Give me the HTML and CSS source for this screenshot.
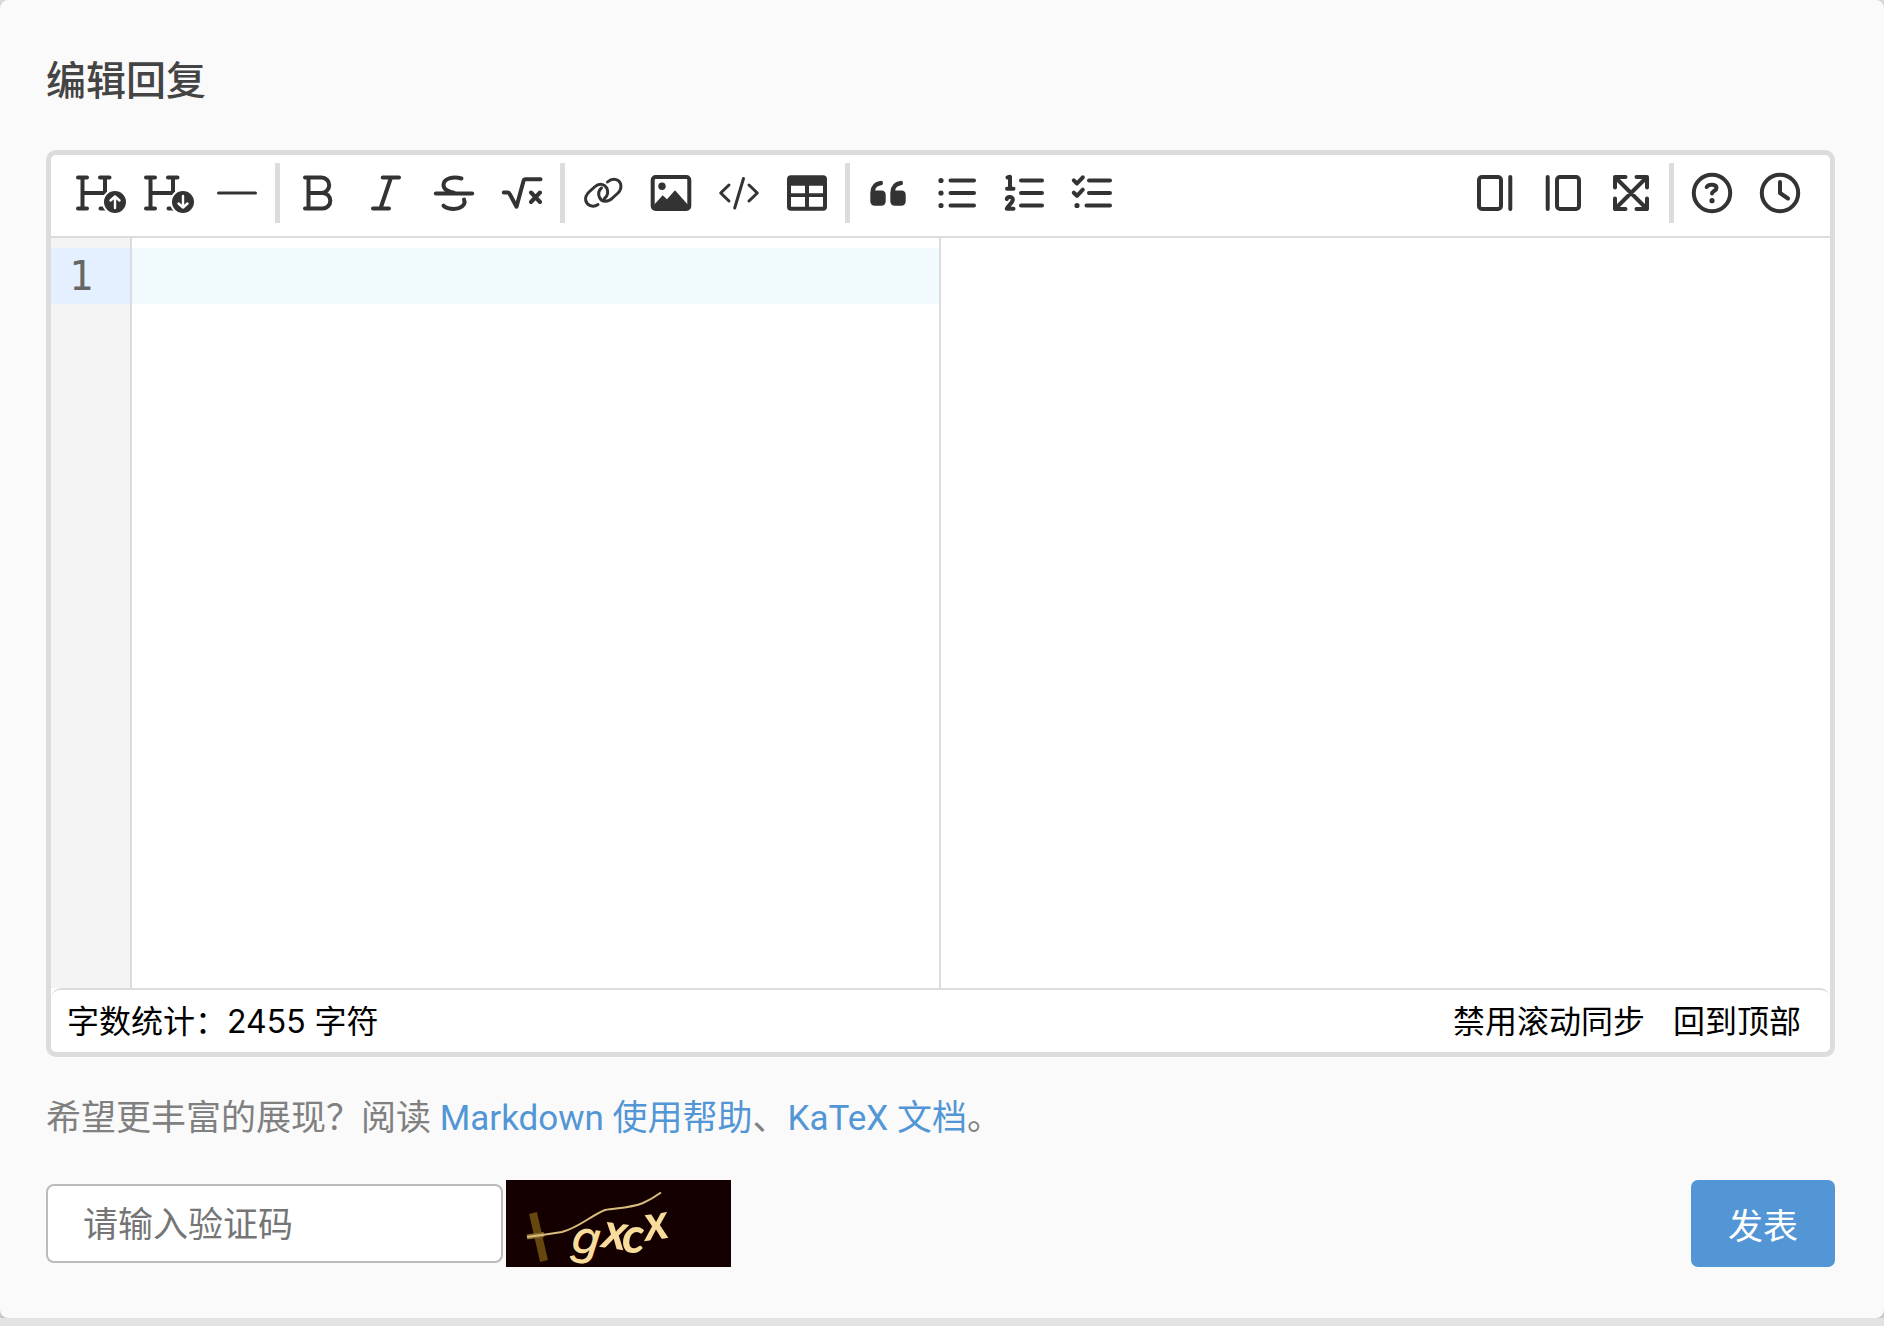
FILE: index.html
```html
<!DOCTYPE html>
<html lang="zh-CN">
<head>
<meta charset="utf-8">
<title>编辑回复</title>
<link rel="stylesheet" href="styles.css">
</head>
<body>
<form class="card">
  <h1 class="card-title">编辑回复</h1>

  <section class="editor">
    <div class="toolbar">
      <div class="tools">
        <button type="button" class="tool" aria-label="升级标题"><svg viewBox="0 0 68 60"><path d="M11 14.5H20M11 45.5H20M15.5 14.5V45.5M33 14.5H42.500M38 14.500V30M15.500 30H38M33.500 45.500H42"/><circle class="badge" cx="48" cy="39" r="12"/><path class="arrow" d="M48 45V33.500M43.500 37.500L48 33.500L52.500 37.500"/></svg></button>
        <button type="button" class="tool" aria-label="降级标题"><svg viewBox="0 0 68 60"><path d="M11 14.5H20M11 45.5H20M15.5 14.5V45.5M33 14.5H42.500M38 14.500V30M15.500 30H38M33.500 45.500H42"/><circle class="badge" cx="48" cy="39" r="12"/><path class="arrow" d="M48 33V44.500M43.500 40.500L48 44.500L52.500 40.500"/></svg></button>
        <button type="button" class="tool" aria-label="分割线"><svg viewBox="0 0 68 60"><path class="thin" d="M15.500 30H52.500"/></svg></button>
        <span class="divider"></span>
        <button type="button" class="tool" aria-label="粗体"><svg viewBox="0 0 68 60"><path d="M21 14.500H37.500a7.700 7.700 0 0 1 0 15.400H24.500M37.500 29.900H38.500a7.800 7.800 0 0 1 0 15.600H21M24.500 14.500V45.500"/></svg></button>
        <button type="button" class="tool" aria-label="斜体"><svg viewBox="0 0 68 60"><path d="M30.700 14.500H47M21 45.500H37M39 14.500L28.500 45.500"/></svg></button>
        <button type="button" class="tool" aria-label="删除线"><svg viewBox="0 0 68 60"><path d="M15.800 30.500H52.200M41.500 15.500C33 13 23.500 15.500 23.500 22C23.500 27 29 28.500 34.500 30M44 36.500C46.500 43 39 46 34 46C29.500 46 26 45 23.500 42.700"/></svg></button>
        <button type="button" class="tool" aria-label="公式"><svg viewBox="0 0 68 60"><path d="M15.800 29.500H19.500Q21 29.500 21.700 31L28.500 43.700L35.500 18Q36 16.300 37.500 16.300H52.500M43 29.500L52 39M52 29.500L43 39"/></svg></button>
        <span class="divider"></span>
        <button type="button" class="tool" aria-label="链接"><svg viewBox="0 0 68 60"><path class="thin" d="M29 41.500C24 45 18 42.500 16.700 37.500C16 34 17.500 31.500 20 29L25.500 24C30 20 35.500 20.500 38 25.500C39.500 29.500 38.500 33 35.500 35.500M38.500 19C43 15 49.500 15.500 51.500 20.500C52.700 24.500 51.500 27.500 49 30L43.500 35C39 39.500 33 39.500 30.500 34.500C29 30.500 30 27 32.500 25"/></svg></button>
        <button type="button" class="tool" aria-label="图片"><svg viewBox="0 0 68 60"><rect x="15.700" y="14" width="36.600" height="32" rx="3"/><circle class="solid" cx="25" cy="23.300" r="3.700"/><path class="solid" d="M16 43L25.700 32.300L30 36.300L38 27.300L52 43V46H16Z"/></svg></button>
        <button type="button" class="tool" aria-label="代码"><svg viewBox="0 0 68 60"><path class="thin" d="M24 22L15.700 30L24 38M44 22L52.300 30L44 38M38.500 15.500L29.700 45"/></svg></button>
        <button type="button" class="tool" aria-label="表格"><svg viewBox="0 0 68 60"><path class="solid" fill-rule="evenodd" d="M18 12.300H50a4 4 0 0 1 4 4V43.700a4 4 0 0 1-4 4H18a4 4 0 0 1-4-4V16.300a4 4 0 0 1 4-4ZM18 22.700V30.300H32V22.700ZM36 22.700V30.300H50V22.700ZM18 34V43.700H32V34ZM36 34V43.700H50V34Z"/></svg></button>
        <span class="divider"></span>
        <button type="button" class="tool" aria-label="引用"><svg viewBox="0 0 68 60"><path class="solid" d="M27 17.700Q29 17.700 29 20T27 22.200Q21.500 23 21.200 27.500H27.500Q31.700 27.500 31.700 32V38Q31.700 42.700 27 42.700H21Q16.300 42.700 16.300 38V30Q16.300 19 27 17.700ZM47 17.700Q49 17.700 49 20T47 22.200Q41.500 23 41.200 27.500H47.500Q51.700 27.500 51.700 32V38Q51.700 42.700 47 42.700H41Q36.300 42.700 36.300 38V30Q36.300 19 47 17.700Z"/></svg></button>
        <button type="button" class="tool" aria-label="无序列表"><svg viewBox="0 0 68 60"><path d="M28.500 17.500H52M28.500 30H52M28.500 42.500H52"/><g class="solid"><circle cx="19" cy="17.500" r="2.600"/><circle cx="19" cy="30" r="2.600"/><circle cx="19" cy="42.500" r="2.600"/></g></svg></button>
        <button type="button" class="tool" aria-label="有序列表"><svg viewBox="0 0 68 60"><path d="M31 17.500H52M31 30H52M31 42.500H52M17.500 14.500L20 13.800V25.500M17 25.700H23.500M16.800 36C17.500 33 23.300 33.500 22.800 37C22.500 40 18 42.500 16.800 45.700H23.500"/></svg></button>
        <button type="button" class="tool" aria-label="任务列表"><svg viewBox="0 0 68 60"><path d="M31 17.500H52M31 30H52M28.500 42.500H52M15.800 17.300L19 20.500L24.800 14.300M15.800 29.700L19 32.800L24.800 26.700"/><circle class="solid" cx="19" cy="42.500" r="2.600"/></svg></button>
      </div>
      <div class="tools">
        <button type="button" class="tool" aria-label="仅编辑区"><svg viewBox="0 0 68 60"><rect x="18" y="14" width="22" height="32" rx="3"/><path d="M49.300 14V46"/></svg></button>
        <button type="button" class="tool" aria-label="仅预览区"><svg viewBox="0 0 68 60"><rect x="28" y="14" width="22" height="32" rx="3"/><path d="M18.700 14V46"/></svg></button>
        <button type="button" class="tool" aria-label="全屏"><svg viewBox="0 0 68 60"><path d="M28.500 14H18V24.500M39.500 14H50V24.500M28.500 46H18V35.500M39.500 46H50V35.500M18 14L50 46M50 14L18 46"/></svg></button>
        <span class="divider"></span>
        <button type="button" class="tool" aria-label="帮助"><svg viewBox="0 0 68 60"><circle cx="34" cy="30" r="18.200"/><path d="M28.700 24C31 20.500 38.500 21 38.500 25C38.500 28 34 28 34 30.500"/><circle class="solid" cx="34" cy="37.700" r="2.600"/></svg></button>
        <button type="button" class="tool" aria-label="历史"><svg viewBox="0 0 68 60"><circle cx="34" cy="30" r="18.200"/><path d="M34 19V30L42 35.500"/></svg></button>
      </div>
    </div>

    <div class="panes">
      <div class="source">
        <div class="gutter"><span class="line-number">1</span></div>
        <textarea class="code" aria-label="回复内容"></textarea>
      </div>
      <div class="preview"></div>
    </div>

    <div class="status">
      <span>字数统计：2455 字符</span>
      <div class="status-actions">
        <button type="button" class="status-button">禁用滚动同步</button>
        <button type="button" class="status-button">回到顶部</button>
      </div>
    </div>
  </section>

  <p class="hint">希望更丰富的展现？阅读 <a href="#markdown">Markdown 使用帮助</a>、<a href="#katex">KaTeX 文档</a>。</p>

  <div class="submit-row">
    <input class="captcha-input" type="text" aria-label="验证码" placeholder="请输入验证码">
    <svg class="captcha" viewBox="0 0 225 87" role="img" aria-label="验证码图片">
      <rect width="225" height="87" fill="#140000"/>
      <path d="M27 33L38 81" stroke="#66480f" stroke-width="8" fill="none"/>
      <path d="M21 57L38 54.500" stroke="#8a6a2a" stroke-width="5" fill="none"/>
      <path d="M21 57Q44 54 56 52C72 48 86 35 99 30C111 28 125 28 137 23Q146 19 155 12.500" stroke="#d9bd7c" stroke-width="2" fill="none"/>
      <g class="captcha-text">
        <text x="64" y="72" transform="rotate(8 64 72)">g</text>
        <text x="95" y="67" transform="rotate(8 95 67)">x</text>
        <text x="116" y="73">c</text>
        <text x="140" y="61" transform="rotate(-8 140 61)">x</text>
      </g>
    </svg>
    <button type="submit" class="submit">发表</button>
  </div>
</form>
</body>
</html>
```
FILE: styles.css
```css
* {
  box-sizing: border-box;
}

body {
  margin: 0;
  background: #e3e3e3;
  font-family: Inter, "Noto Sans CJK SC", sans-serif;
}

button,
input,
textarea {
  margin: 0;
  font-family: inherit;
}

.card {
  padding: 51px 49px 51px 46px;
  border-radius: 8px;
  background: #fafafa;
  box-shadow: 0 2px 8px rgba(0, 0, 0, 0.3);
}

.card-title {
  margin: 0 0 39px;
  font-size: 40px;
  font-weight: 500;
  line-height: 60px;
  color: #444;
}

.editor {
  border: 5px solid #dcdcdc;
  border-radius: 10px;
  background: #fff;
}

.toolbar {
  display: flex;
  justify-content: space-between;
  padding: 8px 16px 13px;
  border-bottom: 2px solid #dcdcdc;
}

.tools {
  display: flex;
}

.tool {
  width: 68px;
  height: 60px;
  padding: 0;
  border: 0;
  background: none;
  cursor: pointer;
}

.tool svg {
  display: block;
  width: 68px;
  height: 60px;
  fill: none;
  stroke: #333;
  stroke-width: 4;
  stroke-linecap: round;
  stroke-linejoin: round;
}

.tool .solid {
  fill: #333;
  stroke: none;
}

.tool .thin {
  stroke-width: 3;
}

.tool .badge {
  fill: #333;
  stroke: #fff;
  stroke-width: 2;
}

.tool .arrow {
  stroke: #fff;
  stroke-width: 2.4;
}

.divider {
  width: 5px;
  margin: 0 4px;
  background: #dcdcdc;
}

.panes {
  display: grid;
  grid-template-columns: 1fr 1fr;
  height: 750px;
}

.source {
  display: flex;
  border-right: 2px solid #dcdcdc;
}

.gutter {
  width: 81px;
  padding-top: 10px;
  border-right: 2px solid #dcdcdc;
  background: #f4f4f4;
}

.line-number {
  display: block;
  padding-left: 18px;
  background: #e4f0ff;
  font-family: "DejaVu Sans Mono", monospace;
  font-size: 40px;
  line-height: 56px;
  color: #666;
}

.code {
  flex: 1;
  min-width: 0;
  padding: 10px 8px;
  border: 0;
  outline: 0;
  resize: none;
  background: linear-gradient(#f1fafd, #f1fafd) 0 10px / 100% 56px no-repeat;
  font-family: "DejaVu Sans Mono", monospace;
  font-size: 40px;
  line-height: 56px;
}

.status {
  display: flex;
  justify-content: space-between;
  padding: 2px 29px 0 16px;
  border-top: 2px solid #dcdcdc;
  border-radius: 10px 10px 0 0;
  font-size: 32px;
  line-height: 60px;
  color: #000;
}

.status-actions {
  display: flex;
  gap: 28px;
}

.status-button {
  padding: 0;
  border: 0;
  background: none;
  font-size: 32px;
  line-height: 60px;
  color: #000;
}

.hint {
  margin: 36px 0 35px;
  font-family: Roboto, "Noto Sans CJK SC", sans-serif;
  font-size: 35px;
  line-height: 52px;
  color: #808080;
}

.hint a {
  color: #5296d5;
  text-decoration: none;
}

.submit-row {
  display: flex;
  align-items: center;
  gap: 3px;
}

.captcha-input {
  width: 457px;
  height: 79px;
  padding: 0 35px;
  border: 2px solid #bbb;
  border-radius: 8px;
  background: #fff;
  font-size: 35px;
}

.captcha-input::placeholder {
  color: #757575;
}

.captcha {
  width: 225px;
  height: 87px;
}

.captcha-text {
  font-family: Lato, sans-serif;
  font-size: 50px;
  font-style: italic;
  font-weight: 700;
  fill: #f8dc9c;
}

.captcha-text text:first-child {
  font-family: Inter, sans-serif;
  font-size: 46px;
  font-weight: 500;
}

.submit {
  width: 144px;
  height: 87px;
  margin-left: auto;
  padding: 0;
  border: 0;
  border-radius: 7px;
  background: #5296d5;
  font-size: 35px;
  color: #fff;
}
```
